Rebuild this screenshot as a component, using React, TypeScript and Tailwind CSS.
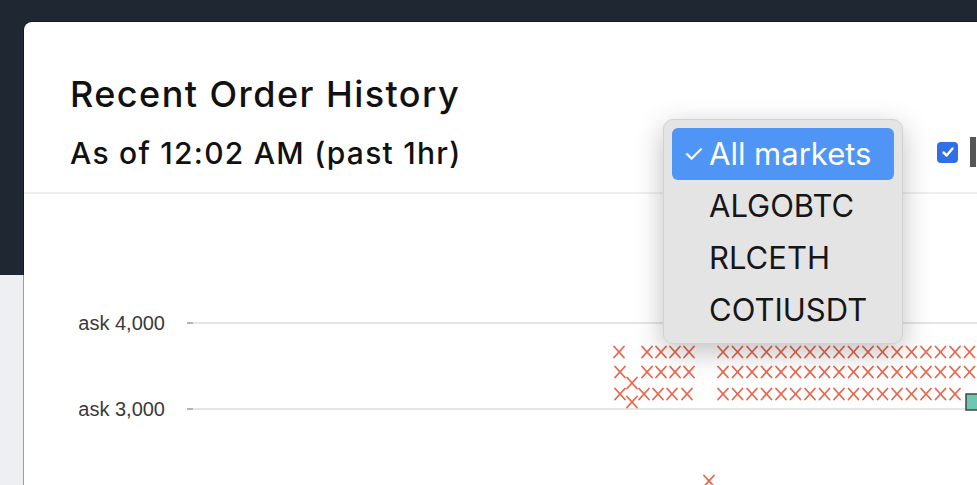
import React from "react";

const RED = "#e8674e";

// x marks for the ask rows, absolute page coordinates
const leftMarks: [number, number][] = [
  [619, 352], [647, 352], [661, 352], [675, 352], [689, 352],
  [620, 372], [647, 372], [661, 372], [675, 372], [689, 372],
  [620, 394], [644, 394], [658, 394], [672, 394], [687, 394],
  [632, 383], [632, 402],
  [709, 481],
];

function rowMarks(y: number, count: number): [number, number][] {
  const out: [number, number][] = [];
  for (let i = 0; i < count; i++) out.push([723 + i * 14.5, y]);
  return out;
}

const marks = [
  ...leftMarks,
  ...rowMarks(352, 18),
  ...rowMarks(372, 18),
  ...rowMarks(394, 17),
];

function Chart() {
  // svg starts at page x=24, y=194
  const ox = 24;
  const oy = 194;
  return (
    <svg width="960" height="300" className="block">
      {[
        { label: "ask 4,000", y: 323 },
        { label: "ask 3,000", y: 409 },
      ].map((t) => (
        <g key={t.label}>
          <text
            x={165 - ox}
            y={t.y - oy + 7}
            textAnchor="end"
            fontSize="20"
            fill="#3a3a3a"
            fontFamily="'Liberation Sans', Arial, sans-serif"
          >
            {t.label}
          </text>
          <line x1={187 - ox} x2={960} y1={t.y - oy} y2={t.y - oy} stroke="#e5e5e5" strokeWidth="2" />
          <line x1={187 - ox} x2={193 - ox} y1={t.y - oy} y2={t.y - oy} stroke="#b5b5b5" strokeWidth="2" />
        </g>
      ))}
      {marks.map(([x, y], i) => (
        <g key={i} stroke={RED} strokeWidth="1.8" strokeLinecap="round">
          <line x1={x - ox - 5} y1={y - oy - 5.5} x2={x - ox + 5} y2={y - oy + 5.5} />
          <line x1={x - ox + 5} y1={y - oy - 5.5} x2={x - ox - 5} y2={y - oy + 5.5} />
        </g>
      ))}
      <rect x={966 - ox} y={394 - oy} width="20" height="16" fill="#6dc7b1" stroke="#444" strokeWidth="1.5" />
    </svg>
  );
}

function MarketMenu() {
  const items = ["ALGOBTC", "RLCETH", "COTIUSDT"];
  return (
    <div className="absolute left-[639px] top-[97px] w-[240px] rounded-[10px] bg-[#e4e4e4] border border-[#d2d2d2] px-[8px] pt-[8px] pb-[7px] shadow-[0_8px_28px_rgba(0,0,0,0.25)]">
      <div className="flex h-[52px] items-center rounded-[6px] bg-[#4f95f5] pl-[11px] text-white">
        <span className="w-[26px] text-[24px]">✓</span>
        <span className="text-[31px]">All markets</span>
      </div>
      {items.map((m) => (
        <div key={m} className="flex h-[52px] items-center pl-[37px] text-[31px] text-[#161616]">
          {m}
        </div>
      ))}
    </div>
  );
}

export default function App() {
  return (
    <div
      className="h-[485px] overflow-hidden bg-[#eeeff2]"
      style={{ fontFamily: "Inter, 'Liberation Sans', sans-serif" }}
    >
      <div className="h-[275px] bg-[#1f2733]" />
      <div className="-mt-[253px] pl-6">
        <div className="relative w-[1000px] rounded-lg bg-white shadow-[0_0_0_1px_rgba(0,0,0,0.35)]">
          <div className="flex items-start justify-between border-b-2 border-[#eef0f3] pl-[46px] pt-[50px] pb-[21px]">
            <div>
              <h1 className="text-[36px] font-medium leading-[44px] tracking-[0.04em] text-[#111]">
                Recent Order History
              </h1>
              <p className="mt-[19px] text-[30px] font-medium leading-[36px] tracking-[0.042em] text-[#111]">
                As of 12:02 AM (past 1hr)
              </p>
            </div>
            <div className="mr-[24px] mt-[65px] flex items-center gap-[12px]">
              <div className="flex h-[21px] w-[21px] items-center justify-center rounded-[4px] bg-[#2f6fe8]">
                <svg width="14" height="14" viewBox="0 0 14 14">
                  <path d="M2.5 7.5 L5.7 10.5 L11.5 3.5" fill="none" stroke="white" strokeWidth="2.4" strokeLinecap="round" strokeLinejoin="round" />
                </svg>
              </div>
              <div className="h-[30px] w-[30px] border-l-[6px] border-[#555]" />
            </div>
          </div>
          <Chart />
          <MarketMenu />
        </div>
      </div>
    </div>
  );
}
